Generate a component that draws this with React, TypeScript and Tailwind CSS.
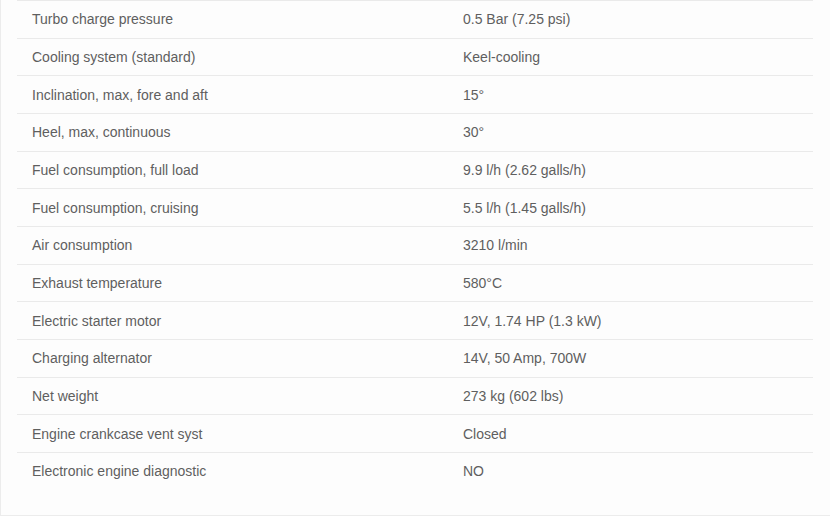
const SPECS: [string, string][] = [
  ["Turbo charge pressure", "0.5 Bar (7.25 psi)"],
  ["Cooling system (standard)", "Keel-cooling"],
  ["Inclination, max, fore and aft", "15°"],
  ["Heel, max, continuous", "30°"],
  ["Fuel consumption, full load", "9.9 l/h (2.62 galls/h)"],
  ["Fuel consumption, cruising", "5.5 l/h (1.45 galls/h)"],
  ["Air consumption", "3210 l/min"],
  ["Exhaust temperature", "580°C"],
  ["Electric starter motor", "12V, 1.74 HP (1.3 kW)"],
  ["Charging alternator", "14V, 50 Amp, 700W"],
  ["Net weight", "273 kg (602 lbs)"],
  ["Engine crankcase vent syst", "Closed"],
  ["Electronic engine diagnostic", "NO"],
];

export default function App() {
  return (
    <div className="w-[830px] h-[518px] bg-white overflow-hidden">
      <div
        className="border-l border-b border-[#ececec] bg-[#fdfdfd] pl-[16px] pr-[17px] pb-[25px] w-[840px]"
        style={{ fontFamily: '"Liberation Sans", Arial, sans-serif' }}
      >
        <div className="w-[796px]">
          {SPECS.map(([label, value]) => (
            <div
              key={label}
              className="flex h-[37.67px] items-center border-t border-[#eaeaea] pt-px text-[14px] text-[#5f5f5f]"
            >
              <div className="w-[431px] pl-[15px]">{label}</div>
              <div className="pl-[15px]">{value}</div>
            </div>
          ))}
        </div>
      </div>
    </div>
  );
}
